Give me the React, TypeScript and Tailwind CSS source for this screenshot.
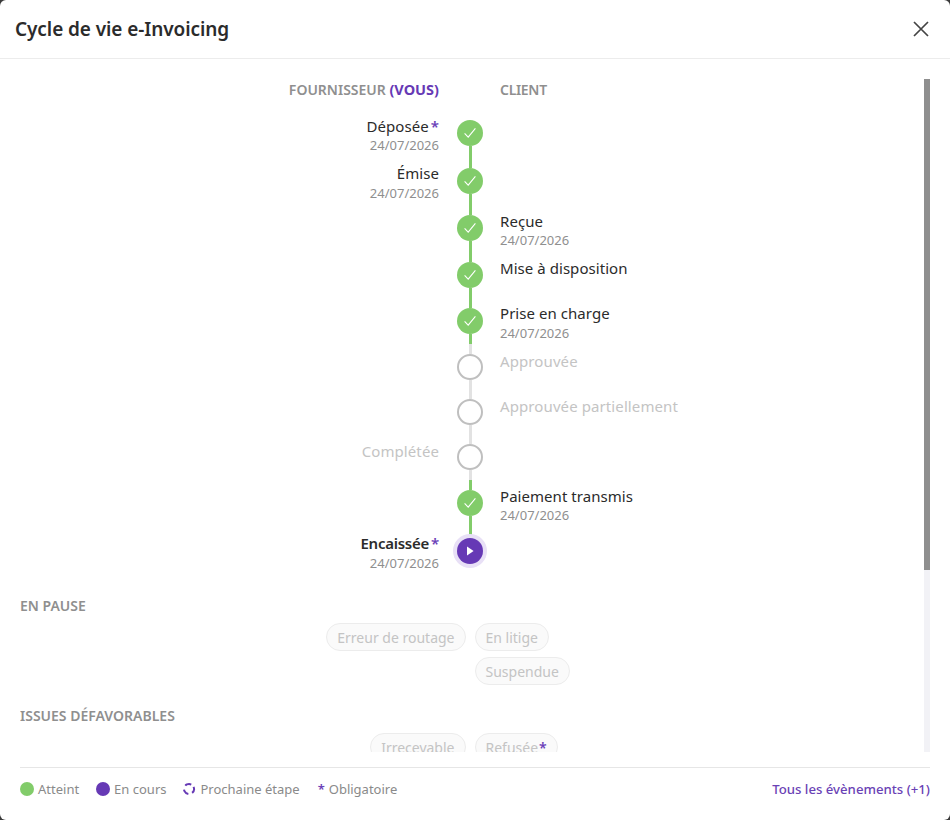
import React from "react";

type Status = "done" | "idle" | "current";
type Row = {
  side: "left" | "right";
  label: string;
  date?: string;
  dateTop?: string;
  star?: boolean;
  status: Status;
  top: string;
  bottom: string;
  pad: string;
};

const rows: Row[] = [
  { side: "left", label: "Déposée", star: true, date: "24/07/2026", status: "done", top: "h-[10px] bg-transparent", bottom: "h-[11px] bg-[#82cc6a]", pad: "pt-[7px]" },
  { side: "left", label: "Émise", date: "24/07/2026", dateTop: "mt-px", status: "done", top: "h-[11px] bg-[#82cc6a]", bottom: "h-[11px] bg-[#82cc6a]", pad: "pt-[7px]" },
  { side: "right", label: "Reçue", date: "24/07/2026", status: "done", top: "h-[10px] bg-[#82cc6a]", bottom: "h-[11px] bg-[#82cc6a]", pad: "pt-[7px]" },
  { side: "right", label: "Mise à disposition", status: "done", top: "h-[10px] bg-[#82cc6a]", bottom: "h-[10px] bg-[#82cc6a]", pad: "pt-[7px]" },
  { side: "right", label: "Prise en charge", date: "24/07/2026", dateTop: "mt-px", status: "done", top: "h-[10px] bg-[#82cc6a]", bottom: "h-[10px] bg-[#82cc6a]", pad: "pt-[6px]" },
  { side: "right", label: "Approuvée", status: "idle", top: "h-[10px] bg-[#e2e2e2]", bottom: "h-[10px] bg-[#e2e2e2]", pad: "pt-[8px]" },
  { side: "right", label: "Approuvée partiellement", status: "idle", top: "h-[9px] bg-[#e2e2e2]", bottom: "h-[10px] bg-[#e2e2e2]", pad: "pt-[7px]" },
  { side: "left", label: "Complétée", status: "idle", top: "h-[9px] bg-[#e2e2e2]", bottom: "h-[10px] bg-[#e2e2e2]", pad: "pt-[7px]" },
  { side: "right", label: "Paiement transmis", date: "24/07/2026", status: "done", top: "h-[10px] bg-[#82cc6a]", bottom: "h-[11px] bg-[#82cc6a]", pad: "pt-[7px]" },
  { side: "left", label: "Encaissée", star: true, date: "24/07/2026", dateTop: "mt-px", status: "current", top: "h-[11px] bg-[#82cc6a]", bottom: "h-0 bg-transparent", pad: "pt-[7px]" },
];

function Star() {
  return <span className="ml-[2px] font-semibold text-[#6b3fb8]">*</span>;
}

function Node({ status }: { status: Status }) {
  if (status === "done") {
    return (
      <div className="flex h-[26px] w-[26px] shrink-0 items-center justify-center rounded-full bg-[#82cc6a]">
        <svg width="14" height="14" viewBox="0 0 14 14" fill="none">
          <path d="M1.6 7.4 L5.2 11.2 L12.4 2.4" stroke="#ffffff" strokeWidth="1.1" />
        </svg>
      </div>
    );
  }
  if (status === "current") {
    return (
      <div className="flex h-[26px] w-[26px] shrink-0 items-center justify-center rounded-full bg-[#6639b5] shadow-[0_0_0_4px_#e8e0f6]">
        <svg width="10" height="10" viewBox="0 0 10 10">
          <path d="M2 0.6 L8.6 5 L2 9.4 Z" fill="#ffffff" />
        </svg>
      </div>
    );
  }
  return <div className="h-[26px] w-[26px] shrink-0 rounded-full border-2 border-[#bfbfbf] bg-white" />;
}

function TimelineLabel({ row }: { row: Row }) {
  const labelColor =
    row.status === "idle"
      ? "tracking-[0.1px] text-[#c4c4c4]"
      : row.status === "current"
        ? "font-semibold tracking-[-0.25px] text-[#2b2b2b]"
        : "tracking-[0.05px] text-[#2b2b2b]";
  return (
    <div className={row.pad}>
      <div className={`text-[15px] leading-[19px] ${labelColor}`}>
        {row.label}
        {row.star && <Star />}
      </div>
      {row.date && <div className={`text-[13px] leading-[18px] text-[#8f8f8f] ${row.dateTop ?? ""}`}>{row.date}</div>}
    </div>
  );
}

function TimelineRow({ row }: { row: Row }) {
  return (
    <div className="grid grid-cols-[1fr_26px_1fr] gap-x-[18px]">
      <div className="text-right">{row.side === "left" && <TimelineLabel row={row} />}</div>
      <div className="flex flex-col items-center">
        <div className={`w-[3px] ${row.top}`} />
        <Node status={row.status} />
        <div className={`w-[3px] ${row.bottom}`} />
      </div>
      <div className="-ml-px text-left">{row.side === "right" && <TimelineLabel row={row} />}</div>
    </div>
  );
}

function Chip({ label, star }: { label: string; star?: boolean }) {
  return (
    <div className="flex h-[28px] items-center rounded-full border border-[#ececec] bg-[#fafafa] px-[10px] text-[14px] text-[#c4c4c4]">
      {label}
      {star && <span className="ml-px font-semibold text-[#6b3fb8]">*</span>}
    </div>
  );
}

function SectionTitle({ children }: { children: React.ReactNode }) {
  return <div className="text-[14px] font-semibold leading-[20px] text-[#8f8f8f]">{children}</div>;
}

export default function App() {
  return (
    <div className="h-[820px] w-[950px] overflow-hidden bg-[#3a3a3a] font-['Noto_Sans',sans-serif]">
      <div className="flex h-full flex-col overflow-hidden rounded-md bg-white">
        <header className="flex h-[59px] shrink-0 items-center justify-between border-b border-[#ececec] pl-[15px] pr-[20px]">
          <h1 className="pt-px text-[19px] font-semibold tracking-[-0.08px] text-[#2b2b2b]">Cycle de vie e-Invoicing</h1>
          <svg width="18" height="18" viewBox="0 0 18 18" fill="none">
            <path d="M2 2 L16 16 M16 2 L2 16" stroke="#444444" strokeWidth="1.7" />
          </svg>
        </header>

        <div className="mt-[20px] flex min-h-0 flex-1 pl-[20px] pr-[20px]">
          <div className="min-w-0 flex-1 overflow-hidden">
            <div className="grid h-[21px] grid-cols-[1fr_26px_1fr] gap-x-[18px] pt-px text-[14px] font-semibold leading-[20px] text-[#8f8f8f]">
              <div className="text-right">
                FOURNISSEUR <span className="text-[14.5px] font-bold leading-none text-[#6639b5]">(VOUS)</span>
              </div>
              <div />
              <div className="-ml-px tracking-[-0.3px]">CLIENT</div>
            </div>

            <div className="mt-[10px]">
              {rows.map((row) => (
                <TimelineRow key={row.label} row={row} />
              ))}
            </div>

            <div className="mt-[24px]">
              <SectionTitle>EN PAUSE</SectionTitle>
              <div className="mt-[7px] grid grid-cols-2 gap-x-[9px]">
                <div className="flex justify-end">
                  <Chip label="Erreur de routage" />
                </div>
                <div className="flex flex-col items-start gap-[6px]">
                  <Chip label="En litige" />
                  <Chip label="Suspendue" />
                </div>
              </div>
            </div>

            <div className="mt-[21px]">
              <SectionTitle>ISSUES DÉFAVORABLES</SectionTitle>
              <div className="mt-[7px] grid grid-cols-2 gap-x-[9px]">
                <div className="flex justify-end">
                  <Chip label="Irrecevable" />
                </div>
                <div className="flex flex-col items-start gap-[6px]">
                  <Chip label="Refusée" star />
                </div>
              </div>
            </div>
          </div>

          <div className="ml-[4px] w-[6px] shrink-0 bg-[#f2f2f6]">
            <div className="h-[491px] w-full bg-[#8f8f8f]" />
          </div>
        </div>

        <footer className="mx-[20px] mt-[15px] flex h-[53px] shrink-0 items-start justify-between border-t border-[#e6e6e6] pt-[11px] text-[13px] leading-[20px] text-[#8a8a8a]">
          <div className="flex items-center">
            <span className="h-[14px] w-[14px] rounded-full bg-[#82cc6a]" />
            <span className="ml-[4px]">Atteint</span>
            <span className="ml-[17px] h-[14px] w-[14px] rounded-full bg-[#6639b5]" />
            <span className="ml-[4px]">En cours</span>
            <svg className="ml-[15px]" width="14" height="14" viewBox="0 0 14 14" fill="none">
              <circle cx="7" cy="7" r="5" stroke="#6639b5" strokeWidth="2" strokeDasharray="6.4 4.07" transform="rotate(-25 7 7)" />
            </svg>
            <span className="ml-[5px]">Prochaine étape</span>
            <span className="ml-[18px] font-semibold text-[#6b3fb8]">*</span>
            <span className="ml-[4px]">Obligatoire</span>
          </div>
          <div className="text-[13.2px] font-medium text-[#6a42b5]">Tous les évènements (+1)</div>
        </footer>
      </div>
    </div>
  );
}
